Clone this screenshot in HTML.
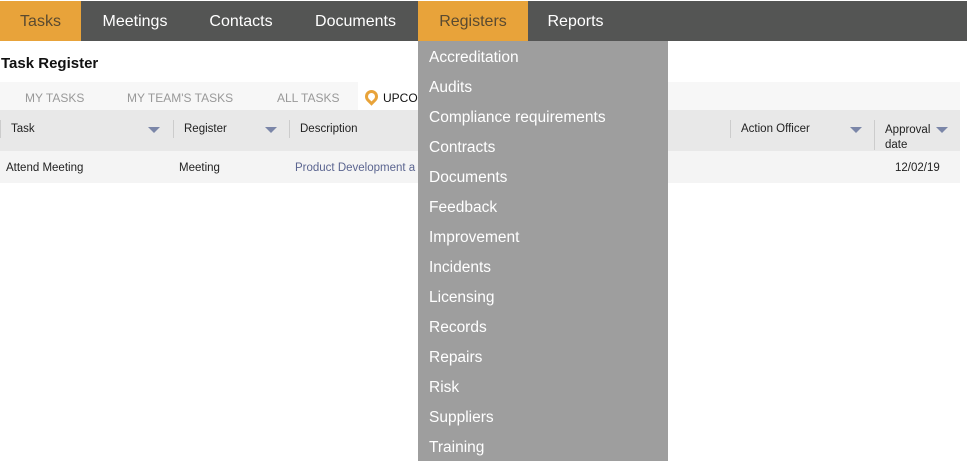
<!DOCTYPE html>
<html><head><style>
*{margin:0;padding:0;box-sizing:border-box}
body{width:967px;height:473px;background:#fff;font-family:"Liberation Sans",sans-serif;position:relative;overflow:hidden}
.nav{position:absolute;top:1px;left:0;width:967px;height:40px;background:#545554}
.nav div{position:absolute;top:0;height:40px;line-height:42px;color:#fff;font-size:16px;text-align:center}
.a{position:absolute;white-space:nowrap}
.tri{position:absolute;width:0;height:0;border-left:6px solid transparent;border-right:6px solid transparent;border-top:6px solid #7b86a8}
.sep{position:absolute;width:1px;background:#ccc}
.dd{position:absolute;left:418px;top:41px;width:250px;height:420px;background:#9e9e9e}
.dd div{position:absolute;left:11px;color:#fff;font-size:15.5px}
</style></head><body>
<div class="nav">
<div style="left:0;width:81px;background:#e8a33a;color:#5a4a30">Tasks</div>
<div style="left:81px;width:108px">Meetings</div>
<div style="left:189px;width:104px">Contacts</div>
<div style="left:293px;width:125px">Documents</div>
<div style="left:418px;width:110px;background:#e8a33a;color:#5a4a30">Registers</div>
<div style="left:528px;width:95px">Reports</div>
</div>
<div class="a" style="left:1px;top:55px;font-size:15px;font-weight:bold;color:#111">Task Register</div>
<div class="a" style="left:0;top:82px;width:960px;height:28px;background:#f7f7f7"></div>
<div class="a" style="left:358px;top:82px;width:60px;height:28px;background:#fff"></div>
<div class="a" style="left:25px;top:91px;font-size:12px;color:#999">MY TASKS</div>
<div class="a" style="left:127px;top:91px;font-size:12px;color:#999">MY TEAM'S TASKS</div>
<div class="a" style="left:277px;top:91px;font-size:12px;color:#999">ALL TASKS</div>
<div class="a" style="left:365px;top:90px;width:13px;height:13px;border-radius:50% 50% 50% 0;transform:rotate(-45deg);border:3.5px solid #e8a33a"></div>
<div class="a" style="left:383px;top:91px;font-size:12px;color:#111">UPCO</div>
<div class="a" style="left:0;top:110px;width:960px;height:41px;background:#e8e8e8"></div>
<div class="sep" style="left:0;top:120px;height:18px"></div>
<div class="sep" style="left:173px;top:120px;height:18px"></div>
<div class="sep" style="left:289px;top:120px;height:18px"></div>
<div class="sep" style="left:730px;top:120px;height:18px"></div>
<div class="sep" style="left:874px;top:120px;height:30px"></div>
<div class="a" style="left:11px;top:123px;font-size:11.5px;color:#222">Task</div>
<div class="tri" style="left:148px;top:127px"></div>
<div class="a" style="left:184px;top:123px;font-size:11.5px;color:#222">Register</div>
<div class="tri" style="left:265px;top:127px"></div>
<div class="a" style="left:300px;top:123px;font-size:11.5px;color:#222">Description</div>
<div class="a" style="left:741px;top:123px;font-size:11.5px;color:#222">Action Officer</div>
<div class="tri" style="left:850px;top:127px"></div>
<div class="a" style="left:885px;top:123px;font-size:11.5px;color:#222;line-height:15px">Approval<br>date</div>
<div class="tri" style="left:936px;top:127px"></div>
<div class="a" style="left:0;top:151px;width:960px;height:32px;background:#f4f4f4"></div>
<div class="a" style="left:6px;top:162px;font-size:11.5px;color:#222">Attend Meeting</div>
<div class="a" style="left:179px;top:162px;font-size:11.5px;color:#222">Meeting</div>
<div class="a" style="left:295px;top:162px;font-size:11.5px;color:#5b6590">Product Development a</div>
<div class="a" style="left:895px;top:162px;font-size:11.5px;color:#222">12/02/19</div>
<div class="dd">
<div style="top:8px">Accreditation</div>
<div style="top:38px">Audits</div>
<div style="top:68px">Compliance requirements</div>
<div style="top:98px">Contracts</div>
<div style="top:128px">Documents</div>
<div style="top:158px">Feedback</div>
<div style="top:188px">Improvement</div>
<div style="top:218px">Incidents</div>
<div style="top:248px">Licensing</div>
<div style="top:278px">Records</div>
<div style="top:308px">Repairs</div>
<div style="top:338px">Risk</div>
<div style="top:368px">Suppliers</div>
<div style="top:398px">Training</div>
</div>
</body></html>
